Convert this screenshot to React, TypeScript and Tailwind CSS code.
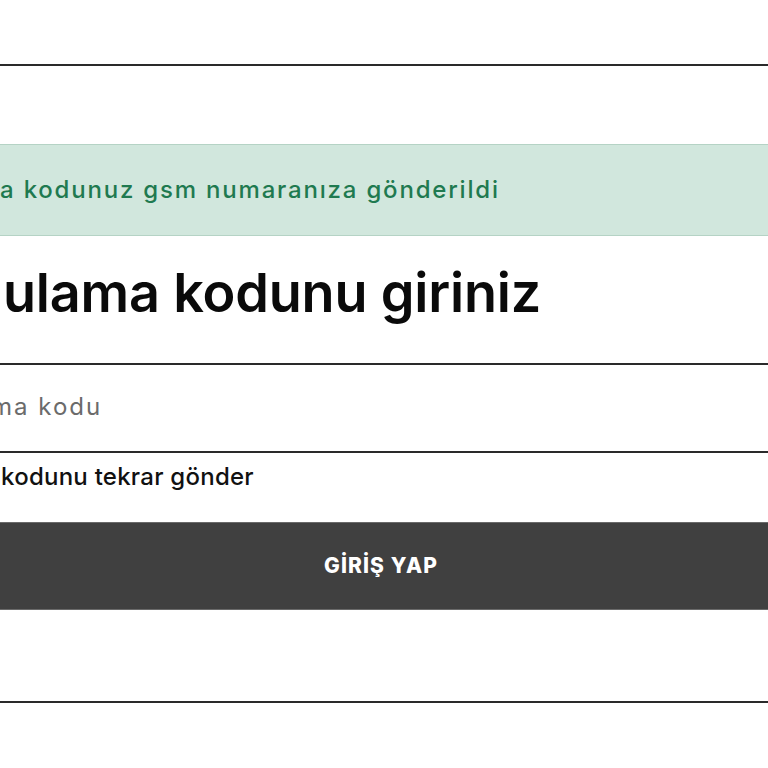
import React from "react";

function Cut({ hidden, shown, gap = "" }: { hidden: string; shown: string; gap?: string }) {
  return (
    <div className="flex whitespace-nowrap">
      <span className="flex w-0 justify-end">{hidden}</span>
      <span className={gap}>{shown}</span>
    </div>
  );
}

export default function App() {
  const font = { fontFamily: "Inter, 'Noto Sans', sans-serif" };
  return (
    <div className="w-[768px] h-[768px] overflow-hidden bg-white" style={font}>
      <div className="w-[768px] flex flex-col">
        <div className="h-[64px]" />
        <div className="h-[2px] bg-[#2a2a2a]" />
        <div className="h-[78px]" />
        <div className="h-[92px] bg-[#d1e7dd] border-y border-[#b5d3c5] flex items-center text-[24px] tracking-[1.8px] text-[#1f7a50] font-medium">
          <Cut hidden="Doğrulam" shown="a kodunuz gsm numaranıza gönderildi" />
        </div>
        <div className="h-[127px] flex items-center pb-[14px]">
          <h1 className="text-[54px] font-semibold text-[#0a0a0a] leading-none tracking-[-0.2px]">
            <Cut hidden="Doğr" shown="ulama kodunu giriniz" gap="ml-[3px]" />
          </h1>
        </div>
        <div className="h-[90px] border-y-2 border-[#2a2a2a] flex items-center pb-[2px]">
          <div className="ml-[-9px] text-[24px] tracking-[2px] text-[#6b6b6b]">
            <Cut hidden="Doğrula" shown="ma kodu" />
          </div>
        </div>
        <div className="h-[48px] flex items-center pl-[1px] text-[24px] tracking-[0.25px] font-medium text-[#111]">
          <Cut hidden={"Doğrulama\u00a0"} shown="kodunu tekrar gönder" />
        </div>
        <div className="h-[21px]" />
        <button className="h-[88px] bg-[#404040] border-y border-[#6a6a6a] flex items-center justify-center pr-[6px] text-white text-[21px] tracking-[1.1px] font-extrabold">
          GİRİŞ YAP
        </button>
        <div className="h-[91px]" />
        <div className="h-[2px] bg-[#2a2a2a]" />
      </div>
    </div>
  );
}
